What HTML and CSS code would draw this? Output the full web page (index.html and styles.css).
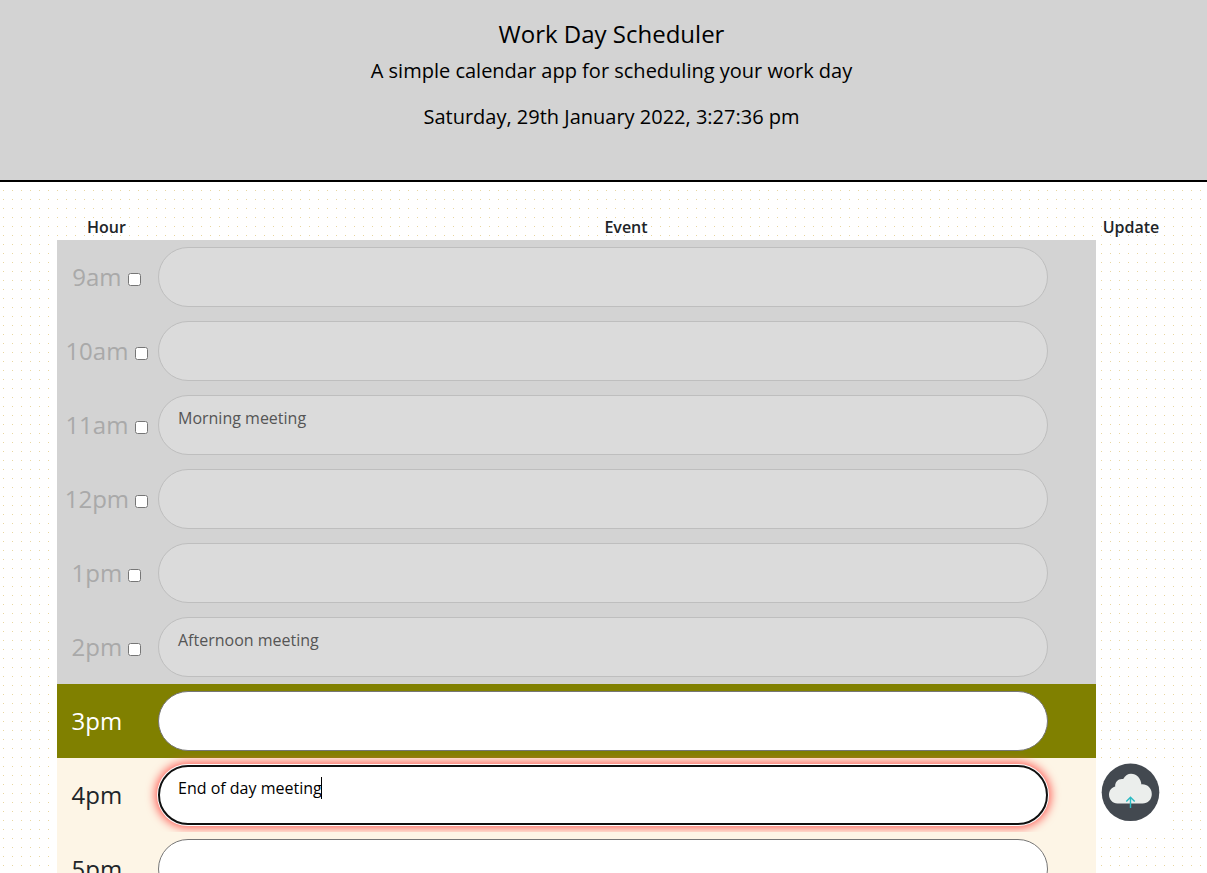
FILE: index.html
```html
<!DOCTYPE html>
<html lang="en">
<head>
<meta charset="utf-8">
<meta name="viewport" content="width=device-width, initial-scale=1">
<title>Work Day Scheduler</title>
<link rel="stylesheet" href="styles.css">
</head>
<body>
<header class="masthead">
  <h1 class="title">Work Day Scheduler</h1>
  <p class="lead">A simple calendar app for scheduling your work day</p>
  <p class="today">Saturday, 29th January 2022, 3:27:36 pm</p>
</header>
<main class="planner">
  <table class="schedule">
    <thead>
      <tr><th class="col-hour" scope="col">Hour</th><th scope="col">Event</th><th class="col-update" scope="col">Update</th></tr>
    </thead>
    <tbody>
      <tr class="past"><td class="hour"><label for="done9">9am</label> <input class="done" type="checkbox" id="done9"></td><td class="event"><textarea class="note" aria-label="9am event" disabled></textarea></td><td class="update"></td></tr>
      <tr class="past"><td class="hour"><label for="done10">10am</label> <input class="done" type="checkbox" id="done10"></td><td class="event"><textarea class="note" aria-label="10am event" disabled></textarea></td><td class="update"></td></tr>
      <tr class="past"><td class="hour"><label for="done11">11am</label> <input class="done" type="checkbox" id="done11"></td><td class="event"><textarea class="note" aria-label="11am event" disabled>Morning meeting</textarea></td><td class="update"></td></tr>
      <tr class="past"><td class="hour"><label for="done12">12pm</label> <input class="done" type="checkbox" id="done12"></td><td class="event"><textarea class="note" aria-label="12pm event" disabled></textarea></td><td class="update"></td></tr>
      <tr class="past"><td class="hour"><label for="done13">1pm</label> <input class="done" type="checkbox" id="done13"></td><td class="event"><textarea class="note" aria-label="1pm event" disabled></textarea></td><td class="update"></td></tr>
      <tr class="past"><td class="hour"><label for="done14">2pm</label> <input class="done" type="checkbox" id="done14"></td><td class="event"><textarea class="note" aria-label="2pm event" disabled>Afternoon meeting</textarea></td><td class="update"></td></tr>
      <tr class="present"><td class="hour"><label for="done15">3pm</label> <input class="done" type="checkbox" id="done15"></td><td class="event"><textarea class="note" aria-label="3pm event"></textarea></td><td class="update"></td></tr>
      <tr class="future"><td class="hour"><label for="done16">4pm</label> <input class="done" type="checkbox" id="done16"></td><td class="event"><textarea class="note editing" aria-label="4pm event">End of day meeting</textarea><span class="caret"></span></td><td class="update">
        <button class="save" type="button" aria-label="Save 4pm event">
          <svg class="save-icon" viewBox="0 0 60 60" aria-hidden="true">
            <circle cx="29.500" cy="30.300" r="28.800" fill="#434950"/>
            <path d="M16.500 41.500C11.500 41.500 8 37.500 8 32.800c0-4.200 2.400-7.200 6.200-8.300-.5-4.600 3.400-8.300 8-7.500 2-3.500 4.800-5.300 7.800-5.300 5.600 0 10 4.700 10.400 10.700C46.200 22 50.800 26.200 50.800 32c0 5.400-3.800 9.500-9.300 9.500z" fill="#ebeeec"/>
            <path d="M29.500 46V35.500M25.300 39.500L29.500 35.300l4.200 4.200" fill="none" stroke="#2bbac2" stroke-width="1.400"/>
          </svg>
        </button></td></tr>
      <tr class="future"><td class="hour"><label for="done17">5pm</label> <input class="done" type="checkbox" id="done17"></td><td class="event"><textarea class="note" aria-label="5pm event"></textarea></td><td class="update"></td></tr>
    </tbody>
  </table>
</main>
</body>
</html>
```
FILE: styles.css
```css
* { box-sizing: border-box; }

body {
  margin: 0;
  font-family: "Open Sans", sans-serif;
  font-size: 16px;
  line-height: 24px;
  color: #212529;
  background-color: #fff;
  background-image: conic-gradient(from 90deg at 8px 8px, #e8d6a0 25%, transparent 0);
  background-size: 9px 9px;
  background-position: 4px 2px;
}

.masthead {
  padding: 16px 0 48px 16px;
  border-bottom: 2px solid #000;
  background: #d3d3d3;
  color: #000;
  text-align: center;
}

.title, .lead, .today { margin: 0; font-weight: 400; }
.title { font-size: 24px; line-height: 36px; }
.lead { margin-bottom: 12px; font-size: 20px; line-height: 38px; }
.today { font-size: 20px; line-height: 30px; }

.planner { padding: 34px 41px 0 57px; }

.schedule {
  width: 100%;
  table-layout: fixed;
  border-collapse: collapse;
}

.schedule th { padding: 0 0 2px; font-weight: 600; line-height: 22px; }
.schedule td { padding: 0; }
.col-hour { width: 99px; }
.col-update { width: 70px; }

.past .hour, .past .event { background: #d3d3d3; }
.present .hour, .present .event { background: #808000; }
.future .hour, .future .event { background: #fdf5e6; }

.hour {
  font-size: 24px;
  text-align: center;
  white-space: nowrap;
}
.past .hour { color: #a9a9a9; }
.present .hour { color: #fff; }

.done { width: 13px; height: 13px; margin: 0; }
.present .done, .future .done { visibility: hidden; }

.schedule .event { position: relative; padding: 7px 48px 7px 2px; }

.note {
  display: block;
  width: 100%;
  height: 60px;
  padding: 10px 19px;
  border: 1px solid #767676;
  border-radius: 30px;
  background: #fff;
  color: #000;
  font: inherit;
  resize: none;
  overflow: hidden;
}
.note:disabled { border-color: #bebebe; background: #dbdbdb; color: #555; }

.note.editing {
  border: 2px solid #101010;
  padding: 9px 18px;
  box-shadow: 0 0 0 1px #fff, 0 0 10px 3px #ff6059;
}

.caret {
  position: absolute;
  top: 19px;
  left: 165px;
  width: 1px;
  height: 22px;
  background: #000;
}

.update { vertical-align: top; }

.save {
  display: block;
  width: 100%;
  padding: 4px 0 8px;
  border: 0;
  background: #fff;
}
.save-icon { display: block; width: 60px; height: 60px; margin: 0 auto; }
```
